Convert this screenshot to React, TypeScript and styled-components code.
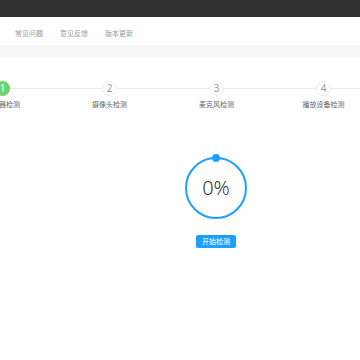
import React from "react";
import styled, { createGlobalStyle } from "styled-components";

const Global = createGlobalStyle`
  html, body { margin: 0; padding: 0; background: #fff; }
  body { font-family: "Noto Sans CJK SC", "Noto Sans", sans-serif; overflow: hidden; }
  #root { width: 360px; height: 360px; overflow: hidden; }
`;

const Header = styled.div`
  height: 17px;
  background: #303030;
`;

const Nav = styled.nav`
  height: 28px;
  display: flex;
  align-items: center;
  gap: 17px;
  padding-left: 15px;
  padding-top: 4px;
  box-sizing: border-box;
  background: #fff;
`;

const NavItem = styled.span`
  font-size: 7px;
  line-height: 9px;
  color: #9a9a9a;
`;

const Band = styled.div`
  height: 12px;
  background: #f6f6f6;
`;

const Content = styled.main`
  width: 534px;
  margin-left: -51px;
  display: flex;
  flex-direction: column;
  align-items: center;
`;

const Steps = styled.div`
  display: flex;
  width: 100%;
  margin-top: 24px;
`;

const Step = styled.div`
  width: 107px;
  flex: none;
  display: flex;
  flex-direction: column;
  align-items: center;
  position: relative;
  &::before {
    content: "";
    position: absolute;
    left: 0;
    right: 0;
    top: 7px;
    height: 1px;
    background: #ececec;
  }
`;

const Circle = styled.div<{ $active?: boolean }>`
  position: relative;
  z-index: 1;
  width: 15px;
  height: 15px;
  margin-top: -0.5px;
  box-sizing: border-box;
  border-radius: 50%;
  display: flex;
  align-items: center;
  justify-content: center;
  font-family: "Noto Sans", sans-serif;
  font-size: 10px;
  line-height: 1;
  color: ${(p) => (p.$active ? "#fff" : "#9a9a9a")};
  background: ${(p) => (p.$active ? "#69d469" : "#fff")};
  border: ${(p) => (p.$active ? "none" : "1.5px solid #ededed")};
`;

const StepLabel = styled.div`
  margin-top: 4px;
  font-size: 7px;
  line-height: 9px;
  color: #666;
  white-space: nowrap;
`;

const RingWrap = styled.div`
  position: relative;
  width: 70px;
  height: 70px;
  margin-top: 44px;
`;

const Percent = styled.div`
  position: absolute;
  inset: 0;
  display: flex;
  align-items: center;
  justify-content: center;
  font-family: "Noto Sans", sans-serif;
  font-weight: 300;
  font-size: 20px;
  color: #333;
`;

const StartButton = styled.button`
  margin-top: 12px;
  width: 40px;
  height: 13px;
  border: none;
  border-radius: 2px;
  background: #1e9fff;
  color: #fff;
  font-family: "Noto Sans CJK SC", sans-serif;
  font-size: 7px;
  line-height: 13px;
  padding: 0;
`;

const steps = ["扬声器检测", "摄像头检测", "麦克风检测", "播放设备检测"];

export default function App() {
  return (
    <>
      <Global />
      <Header />
      <Nav>
        <NavItem>常见问题</NavItem>
        <NavItem>意见反馈</NavItem>
        <NavItem>版本更新</NavItem>
      </Nav>
      <Band />
      <Content>
        <Steps>
          {steps.map((s, i) => (
            <Step key={s}>
              <Circle $active={i === 0}>{i + 1}</Circle>
              <StepLabel>{s}</StepLabel>
            </Step>
          ))}
        </Steps>
        <RingWrap>
          <svg width="70" height="70" viewBox="0 0 70 70">
            <circle cx="35" cy="35" r="30" fill="none" stroke="#1e9fff" strokeWidth="2" />
            <circle cx="35" cy="5" r="4" fill="#1e9fff" />
          </svg>
          <Percent>0%</Percent>
        </RingWrap>
        <StartButton>开始检测</StartButton>
      </Content>
    </>
  );
}
